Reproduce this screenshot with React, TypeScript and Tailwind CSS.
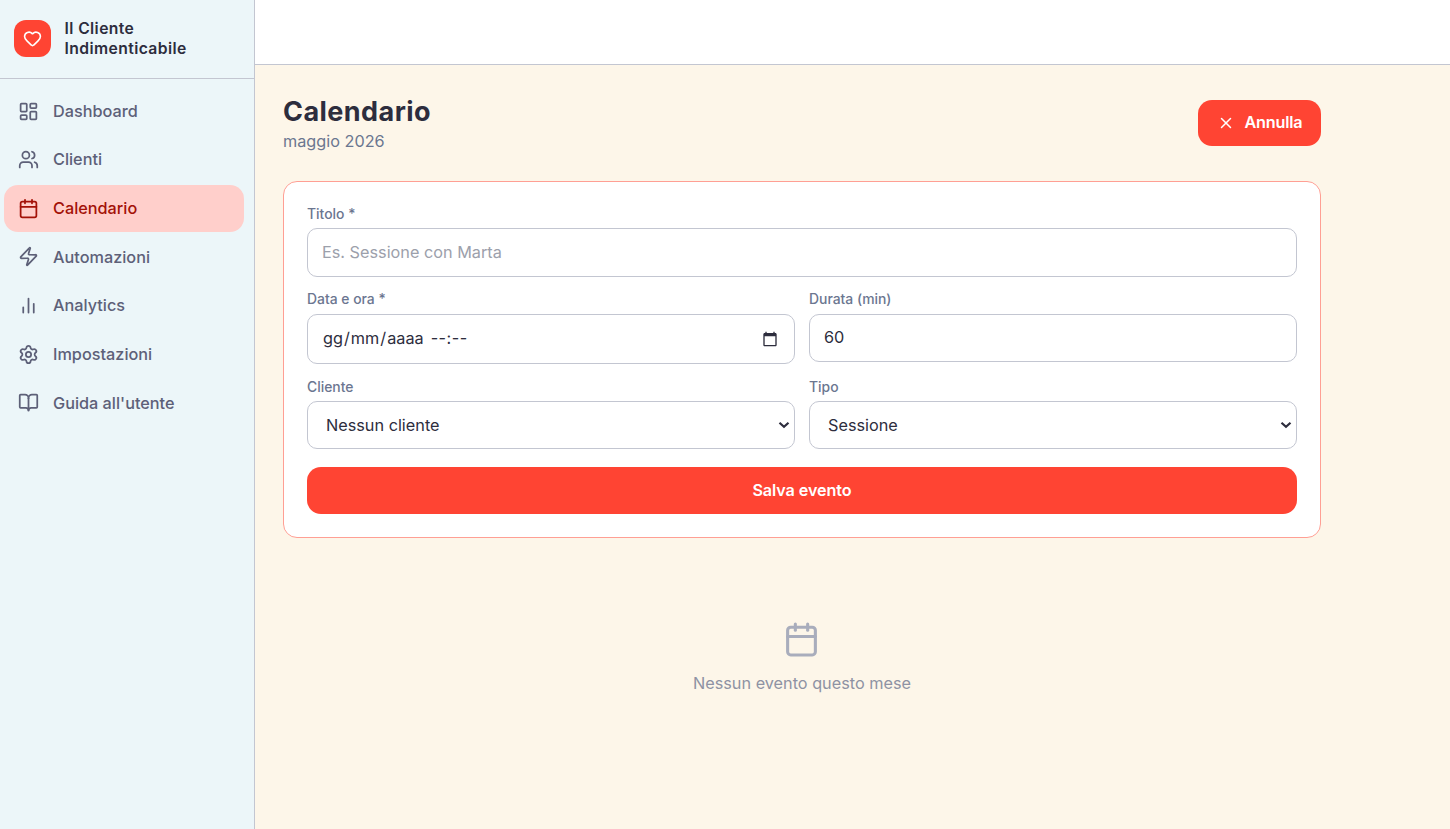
import type { ReactNode } from 'react';
import { BookOpen, Calendar, Heart, LayoutDashboard, Settings, Users, X, Zap } from 'lucide-react';

function BarsIcon({ className }: { className?: string }) {
  return (
    <svg viewBox="0 0 24 24" fill="none" stroke="currentColor" strokeWidth="2" strokeLinecap="round" strokeLinejoin="round" className={className}>
      <path d="M18 20V10M12 20V4M6 20v-6" />
    </svg>
  );
}

function PickerIcon() {
  return (
    <svg viewBox="0 0 24 24" fill="#2d2d3d" className="size-4">
      <path d="M20 3h-1V1h-2v2H7V1H5v2H4c-1.100 0-2 .9-2 2v16c0 1.100.9 2 2 2h16c1.100 0 2-.9 2-2V5c0-1.100-.9-2-2-2zm0 18H4V8h16v13z" />
    </svg>
  );
}

const nav = [
  { label: 'Dashboard', Icon: LayoutDashboard },
  { label: 'Clienti', Icon: Users },
  { label: 'Calendario', Icon: Calendar, active: true },
  { label: 'Automazioni', Icon: Zap },
  { label: 'Analytics', Icon: BarsIcon },
  { label: 'Impostazioni', Icon: Settings },
  { label: "Guida all'utente", Icon: BookOpen },
];

function Field({ label, children }: { label: string; children: ReactNode }) {
  return (
    <label className="block">
      <span className="mb-[4px] block pt-px text-[13.900px] leading-[19px] font-medium text-[#6b7690]">{label}</span>
      {children}
    </label>
  );
}

const control = 'block w-full rounded-[10px] border border-[#c3c6d1] bg-white px-[14px] text-[16.250px] text-[#2d2d3d] outline-none';

function SelectBox({ value }: { value: string }) {
  return (
    <div className="grid items-center">
      <select className={`${control} col-start-1 row-start-1 h-[48px] appearance-none pl-[18px]!`}>
        <option>{value}</option>
      </select>
      <svg viewBox="0 0 12 8" className="pointer-events-none col-start-1 row-start-1 mr-[5px] h-[8px] w-[12px] justify-self-end" fill="none" stroke="#2d2d3d" strokeWidth="2.200">
        <path d="M1.500 1.700 6 5.800l4.500-4.100" />
      </svg>
    </div>
  );
}

export default function App() {
  return (
    <div className="flex h-[829px] overflow-hidden bg-[#fdf6e9] font-['Inter',sans-serif] text-[#2d2d3d]">
      <aside className="flex w-[255px] shrink-0 flex-col border-r border-[#c3c6d1] bg-[#ecf6f9]">
        <div className="flex h-[79px] items-center gap-[14px] border-b border-[#c3c6d1] pb-[1px] pl-[14px]">
          <div className="flex size-[37px] items-center justify-center rounded-[12px] bg-[#ff4433] text-white">
            <Heart className="size-[19px]" />
          </div>
          <div className="-ml-[0.500px] text-[15.700px] leading-[20px] font-semibold tracking-[0.410px]">
            <div>Il Cliente</div>
            <div>Indimenticabile</div>
          </div>
        </div>
        <nav className="flex flex-col gap-[1.660px] pt-[9px] pr-[10px] pl-1">
          {nav.map(({ label, Icon, active }) => (
            <a
              key={label}
              className={`flex h-[47px] items-center gap-[14px] rounded-[14px] pl-[14px] text-[16.250px] font-medium ${active ? 'bg-[#ffcfcb] text-[#a31208]' : 'text-[#5d6078]'}`}
            >
              <Icon className="mb-px size-[21px]" />
              <span className="pb-px">{label}</span>
            </a>
          ))}
        </nav>
      </aside>

      <div className="flex min-w-0 flex-1 flex-col">
        <header className="h-[65px] shrink-0 border-b border-[#c3c6d1] bg-white" />
        <main className="w-[1066px] pt-[29px] pl-[28px]">
          <div className="flex justify-between">
            <div>
              <h1 className="pt-px text-[27px] leading-[34px] font-bold tracking-[0.450px]">Calendario</h1>
              <p className="text-[16.250px] leading-[24px] text-[#6b7690]">maggio 2026</p>
            </div>
            <button className="mt-[6px] flex h-[46px] w-[123px] items-center gap-[9.500px] rounded-[14px] bg-[#ff4433] pl-[19px] text-[16.200px] font-semibold tracking-[-0.200px] text-white">
              <X className="size-[18px]" strokeWidth={2} />
              <span className="pb-[2px]">Annulla</span>
            </button>
          </div>

          <form className="mt-[28px] flex h-[357px] flex-col rounded-[14px] border border-[#ff9f94] bg-white px-[23px] pt-[22px]">
            <Field label="Titolo *">
              <input className={`${control} h-[49px] pb-[2px] placeholder:text-[#9ca0ab]`} placeholder="Es. Sessione con Marta" />
            </Field>
            <div className="mt-[12px] grid grid-cols-2 gap-x-[14px]">
              <Field label="Data e ora *">
                <div className={`${control} mt-[5px] flex! h-[50px] items-center justify-between`}>
                  <span className="flex pb-[2px] pl-px whitespace-pre">
                    <span>gg</span><span className="px-px">/</span><span>mm</span><span className="px-px">/</span><span>aaaa</span>
                    <span className="pl-[7px] tracking-[0.500px]">--:--</span>
                  </span>
                  <span className="pr-[2px] pb-px"><PickerIcon /></span>
                </div>
              </Field>
              <Field label="Durata (min)">
                <input className={`${control} mt-[5px] h-[48px] pb-[2px]`} defaultValue="60" />
              </Field>
            </div>
            <div className="mt-[13px] grid grid-cols-2 gap-x-[14px]">
              <Field label="Cliente">
                <SelectBox value="Nessun cliente" />
              </Field>
              <Field label="Tipo">
                <SelectBox value="Sessione" />
              </Field>
            </div>
            <button type="button" className="mt-[18px] h-[47px] rounded-[14px] bg-[#ff4433] text-[16.200px] font-semibold tracking-[-0.100px] text-white">
              Salva evento
            </button>
          </form>

          <div className="flex flex-col items-center pt-[83px]">
            <Calendar className="mr-px size-[37px] text-[#a9adbc]" />
            <p className="mt-[13px] text-[16.250px] leading-[24px] text-[#8e92a3]">Nessun evento questo mese</p>
          </div>
        </main>
      </div>
    </div>
  );
}
